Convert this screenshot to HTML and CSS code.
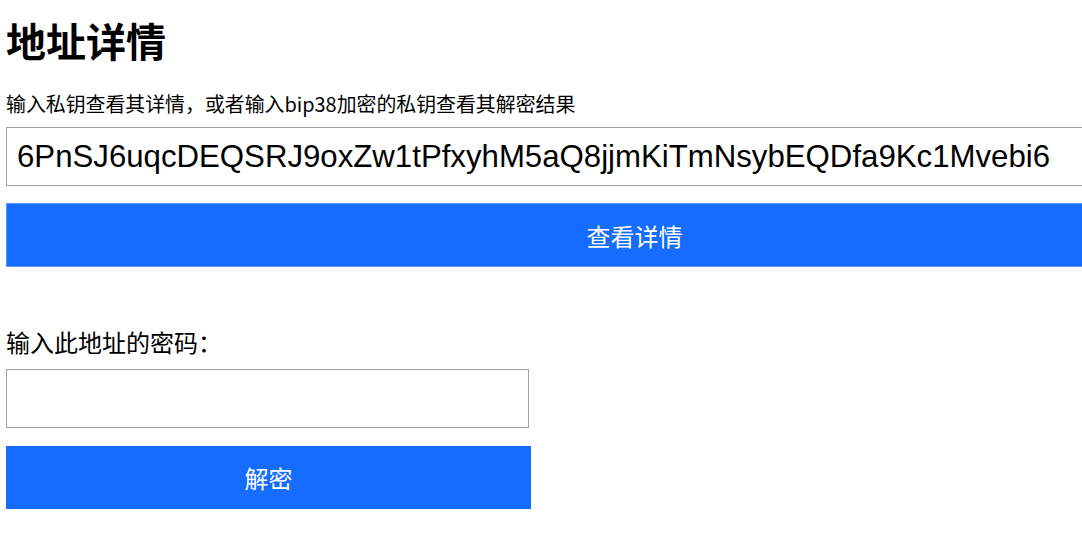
FILE: index.html
```html
<!DOCTYPE html>
<html lang="zh-CN">
<head>
<meta charset="utf-8">
<title>地址详情</title>
<link rel="stylesheet" href="styles.css">
</head>
<body>
<main class="page">
  <h1 class="title">地址详情</h1>
  <p class="hint">输入私钥查看其详情，或者输入bip38加密的私钥查看其解密结果</p>
  <input class="key-input" type="text" value="6PnSJ6uqcDEQSRJ9oxZw1tPfxyhM5aQ8jjmKiTmNsybEQDfa9Kc1Mvebi6">
  <button class="btn btn-wide" type="button">查看详情</button>
  <label class="pw-label" for="pw">输入此地址的密码：</label>
  <input class="pw-input" id="pw" type="password">
  <button class="btn btn-narrow" type="button">解密</button>
</main>
</body>
</html>
```

FILE: styles.css
```css
html, body {
  margin: 0;
  padding: 0;
  background: #ffffff;
  overflow: hidden;
}

body {
  font-family: "Noto Sans CJK SC", "Noto Sans", sans-serif;
  color: #000000;
}

.page {
  display: flex;
  flex-direction: column;
  align-items: flex-start;
  width: 1257px;
  padding: 16px 0 0 6px;
}

.title {
  margin: 0;
  font-size: 40px;
  line-height: 48px;
  font-weight: 700;
}

.hint {
  margin: 25px 0 0;
  font-size: 19.9px;
  line-height: 30px;
}

.key-input {
  margin-top: 8px;
  box-sizing: border-box;
  width: 100%;
  height: 59px;
  border: 1px solid #a3a3a3;
  padding: 0 10px;
  font-family: "Liberation Sans", Arial, sans-serif;
  font-size: 31.2px;
  color: #000000;
  outline: none;
}

.btn {
  box-sizing: border-box;
  background: #166cff;
  color: #ffffff;
  font-family: "Noto Sans CJK SC", "Noto Sans", sans-serif;
  font-size: 24px;
  border: none;
  padding: 0;
  cursor: pointer;
}

.btn-wide {
  margin-top: 17px;
  width: 100%;
  height: 64px;
  border: 1px solid #5a97ff;
}

.pw-label {
  margin-top: 57px;
  font-size: 24px;
  line-height: 36px;
}

.pw-input {
  margin-top: 9px;
  box-sizing: border-box;
  width: 523px;
  height: 59px;
  border: 1px solid #a3a3a3;
  padding: 0 10px;
  font-size: 24px;
  outline: none;
}

.btn-narrow {
  margin-top: 18px;
  width: 525px;
  height: 63px;
}
```
